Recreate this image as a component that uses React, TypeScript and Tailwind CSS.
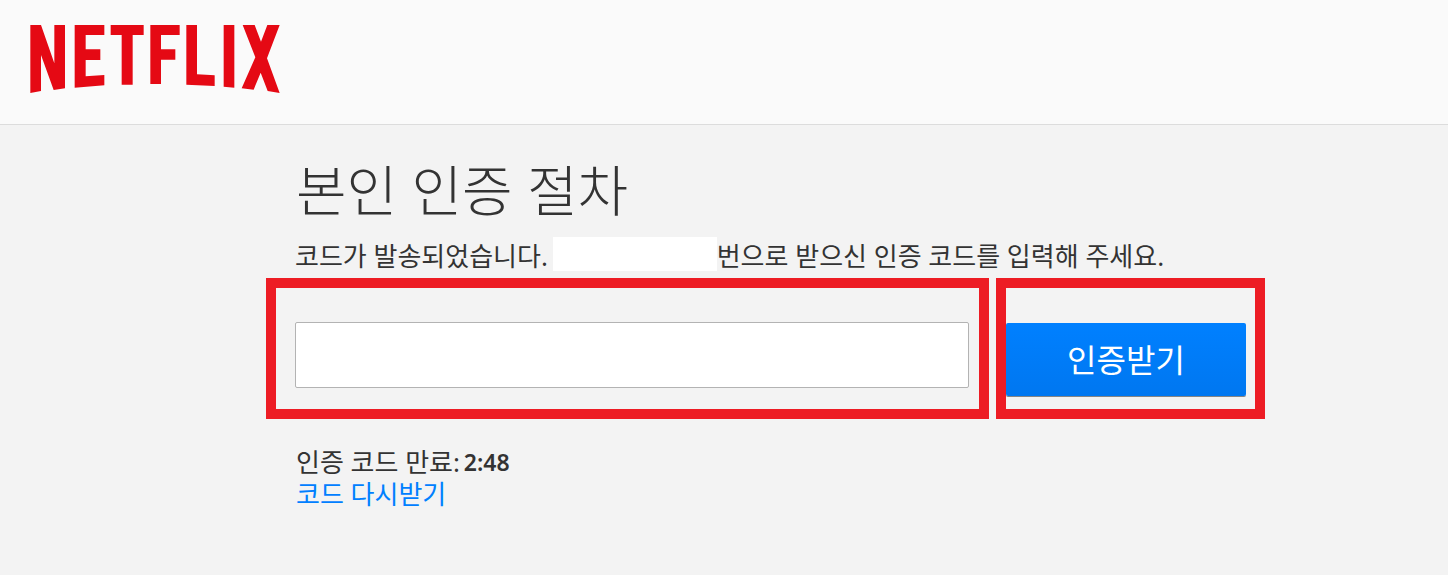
export default function App() {
  return (
    <div className="min-h-[575px] bg-[#f3f3f3] text-[#333] font-['Noto_Sans','Noto_Sans_CJK_KR',sans-serif]">
      {/* Header */}
      <header className="h-[125px] bg-[#fafafa] border-b border-[#dcdcdc] pl-[30px] pt-[25px]">
        <svg width="250" height="68" viewBox="90 75 748 204" fill="#e50914" className="block">
          <polygon points="90,75 122,75 162,190 162,75 194,75 194,265 160,270 122,165 122,273 90,279" />
          <polygon points="223,75 312,75 312,105 256,105 256,148 300,148 300,180 256,180 256,229 312,225 312,256 223,263" />
          <polygon points="331,75 430,75 430,105 397,105 397,254 364,254 364,105 331,105" />
          <polygon points="450,75 538,75 538,105 482,105 482,148 525,148 525,179 482,179 482,252 450,252" />
          <polygon points="558,75 590,75 590,223 643,226 643,258 558,254" />
          <polygon points="670,75 702,75 702,263 670,260" />
          <polygon points="727,75 763,75 782,125 801,75 838,75 800,175 838,279 802,273 781,218 760,269 724,265 765,172" />
        </svg>
      </header>

      <main className="pl-[266px]">
        <h1 className="pl-[30px] pt-[35px] h-[112px] text-[55px] leading-[60px] font-light whitespace-nowrap">본인 인증 절차</h1>

        <p className="pl-[29px] h-[41px] text-[26px] leading-[38px] whitespace-nowrap">
          코드가 발송되었습니다. <span className="inline-block align-top -ml-[2px] w-[164px] h-[34px] bg-white" />번으로 받으신 인증 코드를 입력해 주세요.
        </p>

        {/* Input and button, each outlined in red */}
        <div className="flex gap-[7px]">
          <div className="w-[723px] h-[141px] border-[10px] border-[#ed1c24] pl-[19px] pt-[34px]">
            <input className="block w-[674px] h-[66px] bg-white border border-[#b3b3b3] rounded-[2px]" />
          </div>
          <div className="w-[269px] h-[141px] border-[10px] border-[#ed1c24] pt-[35px]">
            <button className="block w-[240px] h-[73px] text-[32px] text-white rounded-[2px] bg-gradient-to-b from-[#0080ff] to-[#0077f0] shadow-[0_1px_0_rgba(0,0,0,0.45)]">
              인증받기
            </button>
          </div>
        </div>

        <div className="pl-[30px] pt-[28px] text-[26px] leading-[30px]">
          <div>
            인증 코드 만료: <b className="-ml-[3px] align-[1px] font-semibold text-[23px]">2:48</b>
          </div>
          <a href="#" className="block mt-[2px] text-[#0080ff]">코드 다시받기</a>
        </div>
      </main>
    </div>
  );
}
